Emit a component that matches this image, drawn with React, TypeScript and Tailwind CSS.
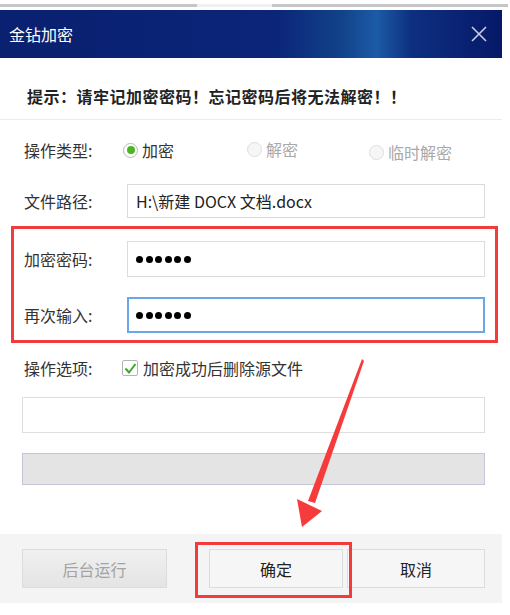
import React from "react";

const font = "font-['Microsoft_YaHei','Noto_Sans_CJK_SC',sans-serif]";

const Radio = ({ label, checked, disabled }: { label: string; checked?: boolean; disabled?: boolean }) => (
  <div className="flex items-center gap-[4px]">
    <span
      className={`flex h-[15px] w-[15px] items-center justify-center rounded-full border ${
        disabled ? "border-[#dedede] bg-[#f6f6f6]" : "border-[#b9b9b9] bg-white"
      }`}
    >
      {checked && <span className="h-[8px] w-[8px] rounded-full bg-[#4cb523]" />}
    </span>
    <span className={`text-[16px] ${disabled ? "text-[#a9a9a9]" : "text-[#333]"}`}>{label}</span>
  </div>
);

const Label = ({ children }: { children: React.ReactNode }) => (
  <div className="w-[103px] shrink-0 text-[16px] text-[#333]">{children}</div>
);

// masked password: six black dots
const Dots = () => (
  <div className="flex gap-[2.5px]">
    {[0, 1, 2, 3, 4, 5].map((i) => (
      <span key={i} className="h-[7px] w-[7px] rounded-full bg-black" />
    ))}
  </div>
);

const App = () => {
  return (
    <div className={`relative h-[615px] w-[510px] overflow-hidden bg-white ${font}`}>
      {/* browser strip */}
      <div className="flex h-[10px] items-center">
        <div className="h-[3px] w-[197px] bg-[#c6c6c6]" />
        <div className="h-[3px] w-[75px] bg-[#f0f0f0]" />
        <div className="h-[3px] w-[236px] bg-[#c6c6c6]" />
      </div>

      <div className="w-[502px]">
        {/* title bar */}
        <div className="flex h-[48px] items-center justify-between bg-[linear-gradient(90deg,#0a2070_0%,#0b2578_55%,#124289_68%,#1c5ba7_75%,#0e2f80_82%,#061868_100%)] pl-[9px] pr-[15px]">
          <span className="text-[16px] text-white">金钻加密</span>
          <svg width="16" height="16" viewBox="0 0 16 16">
            <path d="M1 1 L15 15 M15 1 L1 15" stroke="#c9cfe0" strokeWidth="1.6" />
          </svg>
        </div>

        {/* hint */}
        <div className="flex h-[62px] items-center border-b border-[#ececec] pl-[27px] pt-[15px]">
          <span className="text-[16px] font-bold tracking-[0.5px] text-[#222]">
            提示：请牢记加密密码！忘记密码后将无法解密！！
          </span>
        </div>

        {/* operation type */}
        <div className="flex h-[63px] items-center pb-[3px] pl-[24px]">
          <div className="w-[99px] shrink-0 text-[16px] text-[#333]">操作类型:</div>
          <div className="flex w-[124px]">
            <Radio label="加密" checked />
          </div>
          <div className="flex w-[122px] pb-[2px]">
            <Radio label="解密" disabled />
          </div>
          <div className="flex pt-[4px]">
            <Radio label="临时解密" disabled />
          </div>
        </div>

        {/* file path */}
        <div className="flex h-[36px] items-center pl-[24px] pr-[17px]">
          <Label>文件路径:</Label>
          <div className="flex h-[34px] flex-1 items-center border border-[#dadada] bg-white pl-[8px] text-[16px] text-[#222]">
            H:\新建 DOCX 文档.docx
          </div>
        </div>

        {/* password rows */}
        <div className="ml-[11px] mr-[4px] mt-[7px] flex h-[117px] flex-col border-[3px] border-[#f23b3b] px-[10px] pt-[12px]">
          <div className="flex h-[36px] items-center">
            <Label>加密密码:</Label>
            <div className="flex h-[36px] flex-1 items-center border border-[#dcdcdc] bg-white pl-[8px]">
              <Dots />
            </div>
          </div>
          <div className="mt-[20px] flex h-[36px] items-center">
            <Label>再次输入:</Label>
            <div className="flex h-[36px] flex-1 items-center border-2 border-[#6aa6ea] bg-white pl-[7px]">
              <Dots />
            </div>
          </div>
        </div>

        {/* options */}
        <div className="flex h-[46px] items-center pl-[24px] pt-[4px]">
          <div className="w-[98px] shrink-0 text-[16px] text-[#333]">操作选项:</div>
          <div className="flex items-center gap-[5px]">
            <span className="flex h-[16px] w-[16px] items-center justify-center rounded-[2px] border border-[#b4b4b4] bg-white">
              <svg width="13" height="13" viewBox="0 0 13 13">
                <path d="M1.5 6.5 L5 10.5 L11.5 2" fill="none" stroke="#3ea52b" strokeWidth="2" />
              </svg>
            </span>
            <span className="text-[16px] text-[#333]">加密成功后删除源文件</span>
          </div>
        </div>

        <div className="ml-[22px] mr-[17px] mt-[8px] h-[36px] border border-[#dedede] bg-white" />
        <div className="ml-[22px] mr-[17px] mt-[20px] h-[32px] border border-[#c3c6d6] bg-[#e4e4e4]" />

        {/* footer */}
        <div className="relative mt-[49px] flex h-[69px] items-center bg-[#f4f4f4] pl-[22px] pr-[17px]">
          <button className="h-[39px] w-[145px] border border-[#dcdcdc] bg-[linear-gradient(#f0f0f0,#e4e4e4)] text-[16px] text-[#a3a3a3]">
            后台运行
          </button>
          <button className="ml-[42px] h-[39px] w-[134px] border border-[#dcdcdc] bg-[#f6f6f6] text-[16px] text-[#222]">
            确定
          </button>
          <button className="ml-[4px] h-[39px] flex-1 border border-[#dcdcdc] bg-[#f6f6f6] text-[16px] text-[#222]">
            取消
          </button>
          <div className="absolute left-[195px] top-[8px] h-[56px] w-[157px] border-[3px] border-[#f23b3b]" />
        </div>
      </div>

      {/* annotation arrow */}
      <svg className="absolute left-0 top-0" width="510" height="615" viewBox="0 0 510 615">
        <polygon points="362,359 364,361 315,503 308,501" fill="#f53b3b" />
        <polygon points="302,527 297,499 322,511" fill="#f53b3b" />
      </svg>
    </div>
  );
};

export default App;
